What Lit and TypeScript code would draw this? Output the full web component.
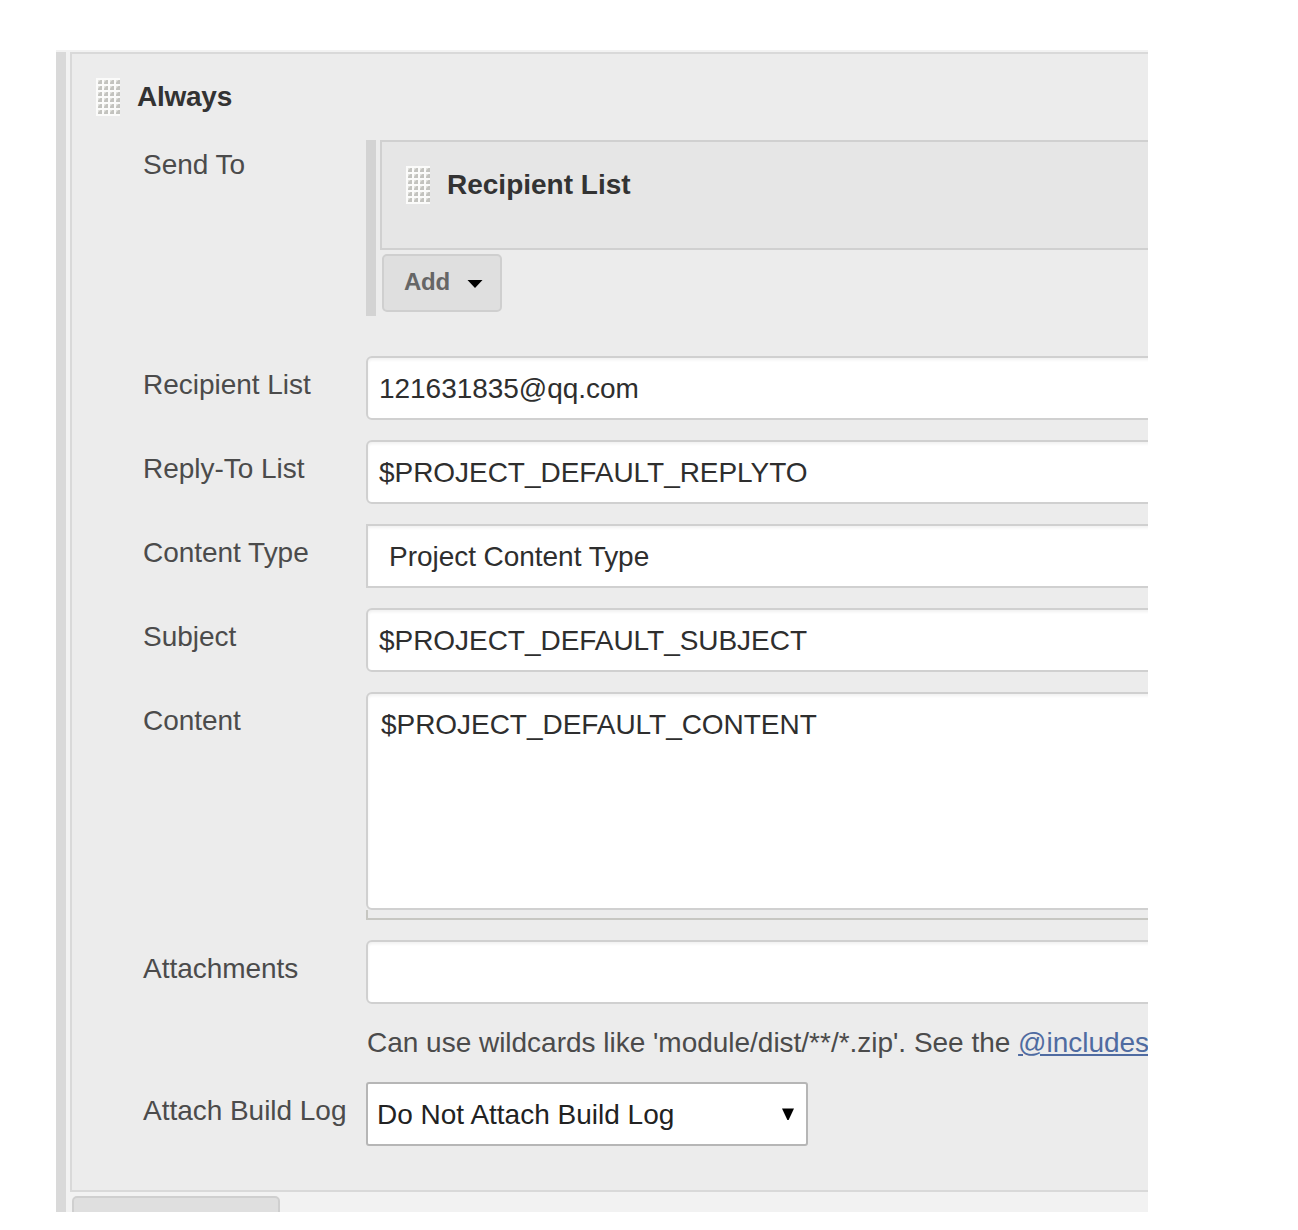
import { LitElement, html, css, svg } from "lit";
import { customElement, property } from "lit/decorators.js";

@customElement("drag-grip")
class DragGrip extends LitElement {
  static styles = css`
    :host { display: block; width: 24px; height: 38px; flex: none; }
    svg { display: block; }
  `;

  render() {
    const cells = [];
    for (let row = 0; row < 6; row++) {
      for (let col = 0; col < 4; col++) {
        const x = 2 + col * 6;
        const y = 2 + row * 6;
        cells.push(svg`<rect x=${x} y=${y} width="4" height="4" fill="#e2e2df"/>
          <path d="M${x + 4} ${y}v4h-4v-1.500l2.500-2.500z" fill="#c3c3bf"/>`);
      }
    }
    return html`<svg width="24" height="38" viewBox="0 0 24 38">
      <rect width="24" height="38" fill="#fbfbfa" />${cells}
    </svg>`;
  }
}

@customElement("form-row")
class FormRow extends LitElement {
  @property() label = "";

  static styles = css`
    :host { display: flex; align-items: flex-start; }
    .label {
      flex: none;
      width: 224px;
      padding: var(--label-top, 13px) 0 0 1px;
      box-sizing: border-box;
      line-height: 32px;
      letter-spacing: -0.03px;
      white-space: nowrap;
      color: #4b4b4b;
    }
    .control { flex: 1; min-width: 0; }
  `;

  render() {
    return html`<div class="label">${this.label}</div>
      <div class="control"><slot></slot></div>`;
  }
}

@customElement("app-root")
class AppRoot extends LitElement {
  static styles = css`
    :host {
      display: block;
      height: 1230px;
      overflow: hidden;
      background: #fff;
      font-family: "Liberation Sans", Arial, sans-serif;
      font-size: 28px;
      line-height: 32px;
      color: #333;
    }
    .frame {
      display: flex;
      box-sizing: border-box;
      width: 1092px;
      height: 1162px;
      margin: 50px 0 0 56px;
      padding-top: 2px;
      overflow: hidden;
      background: #f2f2f2;
    }
    .bar { flex: none; width: 10px; background: #d9d9d9; }
    .main { flex: none; width: 1200px; margin-left: 4px; }
    .panel {
      box-sizing: border-box;
      height: 1140px;
      padding-top: 24px;
      border: 2px solid #d9d9d9;
      background: #ececec;
    }
    .title {
      display: flex;
      align-items: center;
      gap: 17px;
      padding-left: 24px;
      font-weight: bold;
    }
    .always { letter-spacing: -0.25px; }
    .rows {
      display: flex;
      flex-direction: column;
      gap: 20px;
      padding: 24px 0 0 70px;
    }
    .send { --label-top: 9px; margin-bottom: 20px; }
    .nested { display: flex; height: 176px; }
    .nested .bar { background: #d3d3d3; }
    .nested-main { flex: 1; margin-left: 4px; }
    .recipient {
      box-sizing: border-box;
      height: 110px;
      padding-top: 24px;
      border: 2px solid #d0d0d0;
      background: #e6e6e6;
    }
    .button {
      display: flex;
      align-items: center;
      box-sizing: border-box;
      margin: 4px 0 0 2px;
      border: 2px solid #cfcfcf;
      border-radius: 5px;
      background: #dfdfdf;
      color: #666;
      font-size: 24px;
      font-weight: bold;
    }
    .add { width: 120px; height: 58px; padding: 0 0 3px 20px; gap: 17px; letter-spacing: -0.3px; }
    .add svg { margin-top: 4px; }
    .trigger { width: 208px; height: 60px; }
    .field {
      box-sizing: border-box;
      height: 64px;
      padding: 15px 11px 13px;
      border: 2px solid #d0d0d0;
      border-radius: 6px;
      background: #fff;
      box-shadow: inset 0 2px 3px rgba(0, 0, 0, 0.06);
      letter-spacing: -0.04px;
      white-space: nowrap;
      color: #2e2e2e;
    }
    .choice { padding-left: 21px; border-radius: 0; }
    .area { height: 218px; padding-left: 13px; }
    .resize {
      box-sizing: border-box;
      height: 10px;
      border: solid #c7c7c2;
      border-width: 0 0 2px 2px;
    }
    .select {
      display: flex;
      align-items: center;
      justify-content: space-between;
      box-sizing: border-box;
      width: 442px;
      height: 64px;
      padding: 1px 12px 0 9px;
      border: 2px solid #b6b6b6;
      border-radius: 3px;
      background: #fff;
      color: #222;
    }
    .select svg { margin-bottom: 2px; }
    .help { padding: 23px 0 3px 1px; color: #4b4b4b; white-space: nowrap; letter-spacing: -0.015px; }
    .link {
      color: #4f6ba1;
      text-decoration: underline;
      text-decoration-thickness: 2px;
      text-underline-offset: 2px;
    }
  `;

  render() {
    return html`
      <div class="frame">
        <div class="bar"></div>
        <div class="main">
          <div class="panel">
            <div class="title"><drag-grip></drag-grip><span class="always">Always</span></div>
            <div class="rows">
              <form-row class="send" label="Send To">
                <div class="nested">
                  <div class="bar"></div>
                  <div class="nested-main">
                    <div class="recipient">
                      <div class="title"><drag-grip></drag-grip><span>Recipient List</span></div>
                    </div>
                    <div class="button add">
                      <span>Add</span>
                      <svg width="16" height="8" viewBox="0 0 16 8"><path d="M.5 0h15L8 8z" fill="#000" /></svg>
                    </div>
                  </div>
                </div>
              </form-row>
              <form-row label="Recipient List"><div class="field">121631835@qq.com</div></form-row>
              <form-row label="Reply-To List"><div class="field">$PROJECT_DEFAULT_REPLYTO</div></form-row>
              <form-row label="Content Type"><div class="field choice">Project Content Type</div></form-row>
              <form-row label="Subject"><div class="field">$PROJECT_DEFAULT_SUBJECT</div></form-row>
              <form-row label="Content">
                <div class="field area">$PROJECT_DEFAULT_CONTENT</div>
                <div class="resize"></div>
              </form-row>
              <form-row label="Attachments">
                <div class="field"></div>
                <div class="help">Can use wildcards like 'module/dist/**/*.zip'. See the <span class="link">@includes</span></div>
              </form-row>
              <form-row label="Attach Build Log">
                <div class="select">
                  <span>Do Not Attach Build Log</span>
                  <svg width="12" height="12" viewBox="0 0 12 12"><path d="M0 .5h12L6.600 12h-1.200z" fill="#000" /></svg>
                </div>
              </form-row>
            </div>
          </div>
          <div class="button trigger"></div>
        </div>
      </div>
    `;
  }
}
